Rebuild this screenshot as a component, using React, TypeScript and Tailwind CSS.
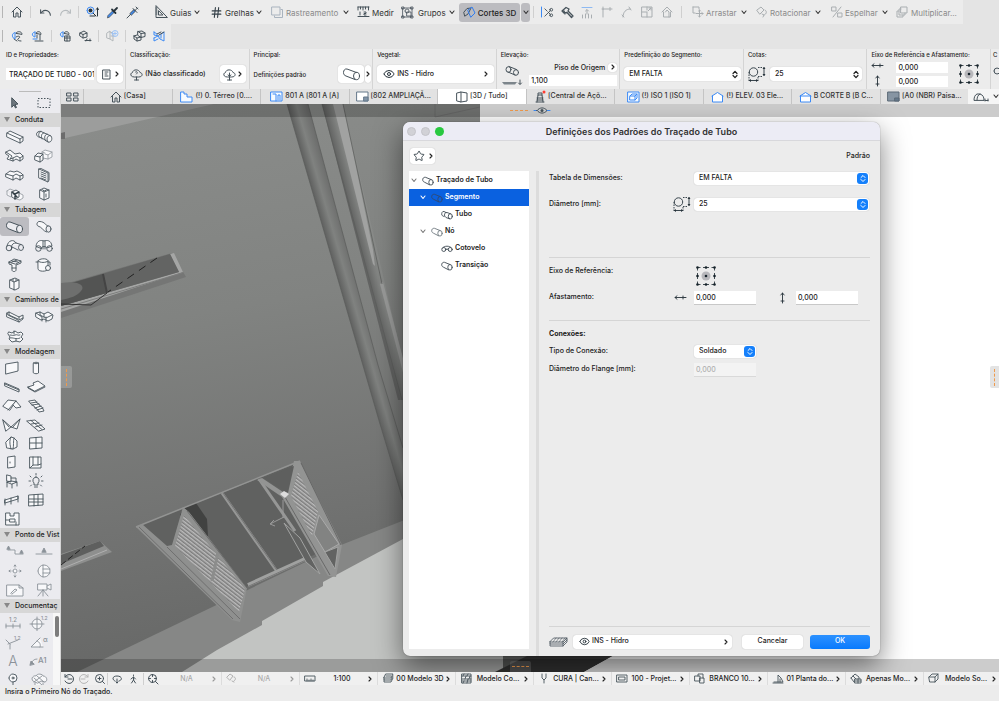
import React from "react";
import { Scissors, Eye, Star, ZoomIn, Undo, Redo, Hash } from "lucide-react";

type Box = { w: number; h: number; d: string; fill?: string; color?: string; extra?: React.ReactNode; sw?: number };

function Draw({ w, h, d, fill = "none", color = "#46525a", extra, sw = 1 }: Box) {
  return (
    <svg width={w} height={h} viewBox={`0 0 ${w} ${h}`} fill="none" stroke={color} strokeWidth={sw} strokeLinejoin="round" strokeLinecap="round" className="shrink-0" aria-hidden="true">
      <path d={d} fill={fill} />
      {extra}
    </svg>
  );
}

const Right = ({ c = "#222" }: { c?: string }) => <Draw w={4} h={6} d="M1 1 L3 3 L1 5" color={c} sw={1.1} />;
const Down = ({ c = "#333" }: { c?: string }) => <Draw w={6} h={5} d="M1 1 L3 3.5 L5 1" color={c} sw={1.1} />;

function Pipe({ color = "#46525a", fill = "none" }: { color?: string; fill?: string }) {
  return (
    <Draw w={19} h={14} color={color} fill={fill} d="M14.500 5.500 L5 2 C2.800 1.500 1.500 3.500 1.500 5.500 C1.500 7.500 2.500 8.500 4 9 L13 12.500"
      extra={<ellipse cx="14.500" cy="9" rx="3" ry="3.700" fill={fill} />} />
  );
}

function TreePipe({ color = "#3f4b53" }: { color?: string }) {
  return (
    <Draw w={12} h={10} color={color} sw={0.9} d="M9 3.500 L3.500 1.300 C1.500 1 .7 2.500 .7 3.800 C.7 5 1.500 5.800 2.500 6.200 L7.500 8.800"
      extra={<ellipse cx="9" cy="6.300" rx="2.200" ry="2.800" />} />
  );
}
const TreeTube = () => <Draw w={12} h={10} sw={0.9} color="#3f4b53" d="M5 2.500 L3 1.500 C1 1 .7 3.500 .7 4 C.7 5.500 1.500 6 3 6.500 M9.500 3.800 L6 2.500 C4 2 3.500 4 3.500 5 C3.500 6.500 4.500 7 5 7.500 L8.500 8.800" extra={<ellipse cx="9.300" cy="6.300" rx="2" ry="2.600" />} />;
const Elbow = () => <Draw w={12} h={10} sw={0.9} color="#3f4b53" d="M1.500 4 C3 1.500 9 1.500 10.500 4 M4.500 6 C5 4.500 7 4.500 7.500 6" extra={<><circle cx="2.800" cy="5.500" r="2" /><circle cx="9.200" cy="5.500" r="2" /></>} />;

function Dimension() {
  return (
    <svg width="18" height="17" viewBox="0 0 18 17" fill="none" stroke="#3a464e" aria-hidden="true" className="shrink-0">
      <circle cx="5.5" cy="6" r="4.2" />
      <path d="M1 11v4M10 11v4M1 6v5M10 1.500h5M10 10.500h5" strokeDasharray="1.500 1" />
      <path d="M1 14.500h9M16 1v9" />
      <path d="M1 14.500l2-1.500v3zM10 14.500l-2-1.500v3zM16 1l-1.500 2h3zM16 10l-1.500-2h3z" fill="#26323a" stroke="none" />
    </svg>
  );
}

function Anchor() {
  const pts = [2.5, 11, 19.5];
  return (
    <svg width="22" height="22" viewBox="0 0 22 22" aria-hidden="true" className="shrink-0">
      <circle cx="11" cy="11" r="4.5" fill="#b7b7bb" />
      {pts.map((y) =>
        pts.map((x) => (
          <g key={`${x}-${y}`}>
            <circle cx={x} cy={y} r="1.3" fill="#17232b" />
            {(x !== 11 || y !== 11) && <path d={x === 11 ? `M8 ${y}h6` : y === 11 ? `M${x} 8v6` : `M${x} ${y}h${x < 11 ? 3 : -3}M${x} ${y}v${y < 11 ? 3 : -3}`} stroke="#17232b" strokeWidth=".8" />}
          </g>
        ))
      )}
    </svg>
  );
}

const ArrowH = () => <Draw w={13} h={7} d="M1 3.500h10M3 1.800L1 3.500l2 1.700M9 2v3M12 3.500h-1" color="#26323a" sw={0.9} />;
const ArrowV = () => <Draw w={7} h={12} d="M3.500 1v10M1.800 3L3.500 1l1.700 2M2 9h3" color="#26323a" sw={0.9} />;

const Divider = () => <span className="h-3 w-px shrink-0 bg-[#cfcfcf]" />;
const Grip = () => <span className="h-3 w-px shrink-0 bg-[#b5b5b5]" />;

function Cell({ w, children, label }: { w: string; children: React.ReactNode; label: string }) {
  return (
    <button aria-label={label} className={`${w} flex h-5 shrink-0 items-center justify-center`}>
      {children}
    </button>
  );
}

function Menu({ w, icon, text, dim, arrow = true }: { w: string; icon: React.ReactNode; text: string; dim?: boolean; arrow?: boolean }) {
  return (
    <button className={`${w} ${dim ? "text-[#8a8a8a]" : "text-[#333]"} flex h-5 shrink-0 items-center gap-[2px] text-[8px] leading-none font-normal`}>
      {icon}
      <span className="pt-[2px]">{text}</span>
      {arrow && <span className="ml-auto"><Down /></span>}
    </button>
  );
}

const G = "#a9aeb1";
const HOUSE = "M1 6 L6 1 L11 6 M2.500 5.500 V11 H5 V7 H7 V11 H9.500 V5.500";

function TopBar() {
  return (
    <div className="flex h-6 shrink-0 items-center bg-[#e4e4e4]">
      <div className="flex h-6 w-[963px] shrink-0 items-center overflow-hidden bg-[#ececec] pl-[2px]">
        <Grip />
        <Cell w="w-[27px]" label="Início"><Draw w={12} h={12} d={HOUSE} /></Cell>
        <Divider />
        <span className="w-[4px]" />
        <Cell w="w-5" label="Desfazer"><Undo size={13} strokeWidth={2} color="#46525a" /></Cell>
        <Cell w="w-5" label="Refazer"><Redo size={13} strokeWidth={2} color="#b5babd" /></Cell>
        <span className="w-[3px]" />
        <Divider />
        <span className="w-[3px]" />
        <Cell w="w-5" label="Localizar"><Draw w={13} h={13} d="M1 4.500 a3.500 3.500 0 1 0 7 0 a3.500 3.500 0 1 0 -7 0" color="#3c8af5" extra={<><circle cx="4.500" cy="4.500" r="2" fill="#26323a" stroke="none" /><path d="M7 7l3 3M11.500 2v8M10 3.500L11.500 2l1 1.500M4 10h5" stroke="#26323a" /></>} /></Cell>
        <Cell w="w-5" label="Conta-gotas"><Draw w={13} h={13} d="M1.500 11.500 L2 9.500 L6.500 5 L8 6.500 L3.500 11 Z" fill="#3c8af5" color="#46525a" sw={0.8} extra={<path d="M6 3.500l3.500 3.500M8.500 4.500l2.500-2.500" stroke="#26323a" strokeWidth="1.800" />} /></Cell>
        <Cell w="w-5" label="Injetar"><Draw w={13} h={13} d="M1 12 L4 9 M4 7.500 L8 3.500 L9.500 5 L5.500 9 Z" fill="#3c8af5" color="#46525a" extra={<path d="M7 2.500l4 4M9 4.500l2.500-2.500M10 1l2 2" />} /></Cell>
        <span className="w-3" />
        <Menu w="w-[46px]" text="Guias" icon={<Draw w={14} h={14} d="M2 1 V12.500 H13 Z M4.500 6 V10 H8.500 Z M2 3h1M2 5h1M2 7h1M2 9h1" />} />
        <span className="w-[10px]" />
        <Menu w="w-[52px]" text="Grelhas" icon={<Hash size={13} strokeWidth={2} color="#333f47" />} />
        <span className="w-[9px]" />
        <Menu w="w-[78px]" dim text="Rastreamento" icon={<Draw w={13} h={13} color="#a9b3be" d="M1 1h8v8h-8zM3.500 10v1.500h8v-8h-1.500" />} />
        <span className="w-[8px]" />
        <Menu w="w-[35px]" arrow={false} text="Medir" icon={<Draw w={13} h={12} d="M1 1v3M3.500 1v2M6 1v3M8.500 1v2M11.500 1v3M1 1h11M1 10.500h11M3 6v3M7 6h2v1.500h-2v1.500h2" />} />
        <span className="w-[9px]" />
        <Menu w="w-[54px]" text="Grupos" icon={<Draw w={15} h={13} d="M2 2h9v9h-9zM1 1h2v2h-2zM10 1h2v2h-2zM1 10h2v2h-2zM10 10h2v2h-2zM4 5a2 2 0 1 0 4 0a2 2 0 1 0-4 0M6 6h4v4h-4z" sw={0.8} />} />
        <span className="w-1" />
        <button className="flex h-[19px] w-[61px] shrink-0 items-center justify-center gap-[2px] rounded-[3px] bg-[#bcbcc0] text-[8px] leading-none text-[#222]">
          <Draw w={13} h={13} d="M1 6 L4 2.500 L8 2 L5 8 L2 10 Z" extra={<path d="M5 4L9 1l3 6-4 4z" stroke="#2f7cf0" />} />
          <span className="pt-[2px]">Cortes 3D</span>
        </button>
        <button aria-label="Opções de cortes" className="ml-px flex h-[19px] w-[9px] shrink-0 items-center justify-center rounded-[3px] bg-[#bcbcc0]"><Down /></button>
        <span className="w-[3px]" />
        <Divider />
        <span className="w-[3px]" />
        <Cell w="w-5" label="Dividir"><span className="flex items-center"><Draw w={3} h={12} d="M1.500 1v10" color={"#3c8af5"} /><Scissors size={11} color="#46525a" className="rotate-180" /></span></Cell>
        <Cell w="w-5" label="Ajustar"><Draw w={13} h={13} d="M1 5 L5 1.500 L8 3 L7 5 L12 10 L10.500 11.500 L6 6.500 L3 7 Z M3 5 L4 8" sw={1.300} /></Cell>
        <Cell w="w-5" label="Elevar"><Draw w={12} h={13} color={G} d="M1.500 12v-3M4.500 12v-4M7.500 12v-4M10.500 12v-3M6 8v-4M4.500 5L6 3.500l1.500 1.500" extra={<path d="M1 1.500h10" stroke="#8db9f2" />} /></Cell>
        <Cell w="w-5" label="Canto"><Draw w={12} h={12} color={G} d="M2 11V3H11M2 1v2M1 3h1M9 1.500v3" /></Cell>
        <Cell w="w-5" label="Curva"><Draw w={12} h={12} color={G} d="M2 11C2 6 5 3 9 3M1 9l2 2M8 1l2 3" /></Cell>
        <Cell w="w-5" label="Redimensionar"><Draw w={12} h={12} color={G} d="M1 1h10v10h-10zM1 6h5v5M6 1v3M7 5l3-3M8 2h2v2" /></Cell>
        <Cell w="w-5" label="Cobertura"><Draw w={12} h={12} color={G} d="M1 6L6 1l5 5M2.500 6v5h7v-5M4.500 6L6 4l2 2v5" /></Cell>
        <span className="w-1" />
        <Divider />
        <span className="w-[10px]" />
        <Menu w="w-[55px]" dim text="Arrastar" icon={<Draw w={12} h={12} color={G} d="M1 1h6v2M1 1v6h2M4 7.500h7M7.500 4v7M6.500 5l1-1 1 1M6.500 10l1 1 1-1M10 6.500l1 1-1 1" />} />
        <span className="w-[9px]" />
        <Menu w="w-[65px]" dim text="Rotacionar" icon={<Draw w={12} h={12} color={G} d="M1 4L5 1l3 3-4 4zM9 4c2 1 2 4-1 5M6 8l2 1-1 2" />} />
        <span className="w-[10px]" />
        <Menu w="w-[57px]" dim text="Espelhar" icon={<Draw w={12} h={12} color={G} d="M1 1h4v4h-4zM10 1L2 11M7 7h4v4h-4z" />} />
        <span className="w-2" />
        <Menu w="w-[62px]" dim arrow={false} text="Multiplicar..." icon={<Draw w={13} h={12} color={G} d="M5 1h6v6h-6zM5 3h-2v6h6v-2M3 5h-2v6h6v-2" />} />
      </div>
    </div>
  );
}

function SecondBar() {
  return (
    <div className="flex h-[25px] shrink-0 bg-[#e4e4e4]">
      <div className="flex w-[171px] items-center bg-[#ececec] pb-px pl-[2px]">
        <Grip />
        <span className="w-1" />
        <Cell w="w-5" label="Mostrar seleção"><Draw w={12} h={12} d="M5 3c1-2 6-2 6 1zM5 7c3-2 5 0 3 1s-2 3 2 3M3 9l3 2" extra={<path d="M4 2.500C1 3 0 7 4 9V3" stroke="#3c8af5" />} /></Cell>
        <Cell w="w-5" label="Camadas"><Draw w={13} h={12} d="M5 3c1-2 5-2 5 1zM6 5v3M9 5v5M4 11h8" extra={<path d="M4 2C1 2 0 6 4 7V2M2 9h4" stroke="#3c8af5" />} /></Cell>
        <span className="w-1" /><Divider /><span className="w-[3px]" />
        <Cell w="w-5" label="Filtrar"><Draw w={12} h={12} d="M5 3c1-2 5-2 5 1zM6 6h5v5h-5zM8 6v5M6 8h5" extra={<path d="M4 2C1 2 0 6 4 7V2" stroke="#3c8af5" />} /></Cell>
        <Cell w="w-5" label="Elemento"><Draw w={13} h={12} d="M1 3L5 1l3 2v4L4 8 1 6zM1 3l3 1.500L8 3M4 4.500V8M6 10.500h6M8 9l-1 2M11 9v2" /></Cell>
        <span className="w-[3px]" /><Divider /><span className="w-[3px]" />
        <Cell w="w-5" label="Adicionar"><Draw w={13} h={12} color="#b3b8bb" d="M1 3L4 1v8l-3-1zM4 2l3 1v8l-3-2M5 6h3" extra={<path d="M6 3.500a3 3 0 1 0 6 0a3 3 0 1 0-6 0M7.500 3.500h3M9 2v3" stroke="#9cc3f7" />} /></Cell>
        <span className="w-[3px]" /><Divider /><span className="w-[3px]" />
        <Cell w="w-5" label="Blocos"><Draw w={13} h={12} d="M5 1.500l4-.5 3 2v3.500l-4 1-3-2zM5 1.500l3 2 4-.5M8 3.500V7.500M1 6l3-1M1 6v3l3 2 4-1V7.500M1 6l3 2v3M4 8l4-1" /></Cell>
        <Cell w="w-5" label="Corte"><Draw w={12} h={12} color="#3c8af5" d="M1 2l3 2M1 2v3l5 1M1 8l4-2 2 3 4 2V2L8 4v4M1 8v3l4-2" extra={<path d="M4 4l4-2M6 5l5-3" stroke="#46525a" />} /></Cell>
      </div>
    </div>
  );
}

function Column({ title, children, first }: { title: string; children: React.ReactNode; first?: boolean }) {
  return (
    <div className={`${first ? "w-[126px] shrink-0 pl-[6px]" : "min-w-0 flex-1 pl-1"} flex flex-col border-r border-[#d4d4d4] pr-[2px]`}>
      <div className="h-3 pt-[2px] text-[6px] leading-[8px] whitespace-nowrap text-[#222]">{title}</div>
      <div className="flex h-7 items-center pb-[2px]">{children}</div>
    </div>
  );
}

const white = "rounded-[3px] bg-white shadow-[0_0_1px_rgba(0,0,0,.3)]";

const UpDown = () => <Draw w={6} h={9} d="M1 3.500L3 1.300l2 2.200M1 5.500l2 2.200 2-2.200" color="#222" sw={1.2} />;

function InfoBox() {
  return (
    <div className="flex h-10 shrink-0 overflow-hidden bg-[#ececec] text-[#222]">
      <Column first title="ID e Propriedades:">
        <input aria-label="ID" defaultValue="TRAÇADO DE TUBO - 001" className="h-3 w-[88px] min-w-0 bg-white pl-[3px] text-[7px] outline-none" />
        <button aria-label="Propriedades" className={`${white} ml-[3px] flex h-[18px] w-[26px] shrink-0 items-center justify-center gap-1`}>
          <Draw w={9} h={11} d="M1 1h7v9h-7zM3 3h3M3 5h2M3 7h3" /><Right />
        </button>
      </Column>
      <Column title="Classificação:">
        <Draw w={13} h={13} d="M4 9C0 9 0 5 2.500 4.500 3 1 9 1 10 4.500c3 .5 3 4.500-1 4.500zM6.500 9v3M4.500 12h4M5.500 4c1-1 3 0 1 2" />
        <span className="ml-[2px] text-[7px] whitespace-nowrap">(Não classificado)</span>
        <button aria-label="Escolher classificação" className={`${white} mr-px ml-auto flex h-[18px] w-[26px] items-center justify-center gap-[2px]`}>
          <Draw w={13} h={13} d="M4 9C0 9 0 5 2.500 4.500 3 1 9 1 10 4.500c3 .5 3 4.500-1 4.500zM6.500 5v7M4.500 12h4M5 7l1.500 1 1.500-1" /><Right />
        </button>
      </Column>
      <Column title="Principal:">
        <span className="text-[6px] whitespace-nowrap">Definições padrão</span>
        <button aria-label="Tubo" className={`${white} ml-auto flex h-[18px] w-[26px] items-center justify-center`}><Pipe /></button>
        <button aria-label="Mais" className={`${white} -mr-px ml-px flex h-[18px] w-[6px] items-center justify-center`}><Right /></button>
      </Column>
      <Column title="Vegetal:">
        <button className={`${white} flex h-[18px] w-full items-center px-[6px] text-[7px]`}>
          <Eye size={12} color="#26323a" /><span className="ml-[2px]">INS - Hidro</span><span className="ml-auto"><Right /></span>
        </button>
      </Column>
      <Column title="Elevação:">
        <Draw w={22} h={24} d="M8 4.500l7.500 3M7 10l7 3" extra={<><ellipse cx="7.500" cy="7.500" rx="2.500" ry="2.800" /><ellipse cx="15" cy="10.500" rx="2.500" ry="2.800" /><path d="M1 20h15l-2 2.500h-11z" fill="#7c858b" stroke="none" /><path d="M19 18v4M17.500 21l1.500 1.500 1.500-1.500" /></>} />
        <div className="ml-auto flex w-[88px] flex-col gap-[3px]">
          <div className="flex items-center justify-end gap-[3px] text-[7px] leading-[9px]">Piso de Origem<button aria-label="Piso" className={`${white} flex size-[9px] items-center justify-center`}><Right /></button></div>
          <input aria-label="Elevação" defaultValue="1,100" className="h-[11px] w-full bg-white pl-[2px] text-[7px] outline-none" />
        </div>
      </Column>
      <Column title="Predefinição do Segmento:">
        <Pick label="Predefinição do Segmento" value="EM FALTA" />
      </Column>
      <Column title="Cotas:">
        <Dimension /><span className="w-1 shrink-0" />
        <Pick label="Cotas" value="25" />
        <span className="w-[2px] shrink-0" />
      </Column>
      <Column title="Eixo de Referência e Afastamento:">
        <div className="flex w-full items-center">
          <div className="flex w-[13px] flex-col items-center gap-[6px]"><ArrowH /><ArrowV /></div>
          <div className="ml-3 flex w-[52px] flex-col gap-[3px]">
            <input aria-label="Afastamento horizontal" defaultValue="0,000" className="h-[11px] w-full bg-white pl-[2px] text-[7px] outline-none" />
            <input aria-label="Afastamento vertical" defaultValue="0,000" className="h-[11px] w-full bg-white pl-[2px] text-[7px] outline-none" />
          </div>
          <span className="w-[10px]" /><Anchor />
        </div>
      </Column>
      <div className="flex w-2 shrink-0 flex-col overflow-hidden pt-[2px] pl-[2px] text-[6px] leading-[8px]">C<span className="pt-2"><Draw w={8} h={8} d="M1 4a3 3 0 1 0 6 0a3 3 0 1 0-6 0" /></span></div>
    </div>
  );
}

function Pick({ label, value }: { label: string; value: string }) {
  return (
    <div className={`${white} relative h-[14px] min-w-0 flex-1`}>
      <select aria-label={label} className="block size-full appearance-none bg-transparent pl-[5px] text-[7px] text-[#222] outline-none"><option>{value}</option></select>
      <span className="pointer-events-none absolute inset-y-0 right-[3px] flex items-center"><UpDown /></span>
    </div>
  );
}

const BLUE = "#3c8af5";
const HUT = "M1 5L6.500 1.500l5.500 3.500M1.500 5v6h10v-6";
const tabs: { t: string; i: React.ReactNode; on?: boolean }[] = [
  { t: "[Casa]", i: <Draw w={12} h={12} d={HOUSE} /> },
  { t: "(!) 0. Térreo [0....", i: <Draw w={13} h={12} color={BLUE} fill="#f7fbff" d="M1 1h3v2h3v3h5v5h-11z" /> },
  { t: "801 A [801 A [A]", i: <Draw w={13} h={11} color={BLUE} fill="#f7fbff" d="M1 1h11v9h-11z" extra={<path d="M3 3h3v7M8 9v-5h2v5" />} /> },
  { t: "[802 AMPLIAÇÃ...", i: <Draw w={13} h={11} color="#65788a" fill="#fff" d="M1 1h11v9h-11z" extra={<path d="M8 6h4v4h-4z" fill="#8295a8" />} /> },
  { t: "[3D / Tudo]", i: <Draw w={12} h={12} d="M1 2l4-1v10l-4-1zM5 1l6 1v8l-6 1" />, on: true },
  { t: "[Central de Açõ...", i: <Draw w={12} h={13} d="M3 12l1-7h4l1 7M2 12h8M4 5v-2h4v2M3 8h6M3 10h6" extra={<circle cx="10" cy="2" r="1.500" fill="#ff3b30" stroke="none" />} /> },
  { t: "(!) ISO 1 [ISO 1]", i: <Draw w={13} h={12} color={BLUE} fill="#f7fbff" d="M1 1h11v10h-11z" extra={<path d="M3 5l2-2h5v4l-2 2h-5zM3 5h5v4M8 5l2-2" />} /> },
  { t: "(!) ELEV. 03 Ele...", i: <Draw w={13} h={12} color={BLUE} fill="#fff" d={HUT} /> },
  { t: "B CORTE B [B C...", i: <Draw w={13} h={12} color={BLUE} fill="#fff" d={HUT} extra={<path d="M1.500 5h10" />} /> },
  { t: "[A0 (NBR) Paisa...", i: <Draw w={13} h={11} color="#5a6876" fill="#8795a3" d="M1 1h11v9h-11z" extra={<path d="M8 7h4v3h-4z" fill="#65788a" />} /> },
];

function Tabs() {
  return (
    <nav className="flex h-[15px] min-w-0 bg-[#e2e2e2] text-[7px] text-[#333]">
      <button aria-label="Vistas" className="flex w-[22px] shrink-0 items-center justify-center"><Draw w={13} h={10} d="M1 1h4v3h-4zM8 1h4v3h-4zM1 6h4v3h-4zM8 6h4v3h-4z" /></button>
      {tabs.map((t) => (
        <button key={t.t} className={`${t.on ? "bg-white" : ""} flex min-w-0 flex-1 items-center justify-center gap-[2px] overflow-hidden border-l border-[#c4c4c4] whitespace-nowrap`}>{t.i}<span>{t.t}</span></button>
      ))}
      <button aria-label="Mais vistas" className="flex w-[31px] shrink-0 items-center justify-end gap-1 bg-[#f5f5f5]"><Draw w={16} h={10} d="M1 8c0-3 1-5 3-6h3c3 1 4 3 4 6zM4 8c0-3 1-5 3-6M12 8.500h3M12 7v2M15 7v2" /><Down /></button>
    </nav>
  );
}

const S = (d: string, color?: string, extra?: React.ReactNode) => <Draw w={20} h={16} d={d} color={color} sw={0.9} fill="#f8f8fa" extra={extra} />;
const lines = (d: string) => <path d={d} fill="none" />;
const Q = "#8b9299";

const groups: { name: string; grid: string; items: [string, React.ReactNode][] }[] = [
  { name: "Conduta", grid: "auto-rows-[19px] grid-cols-[29px_29px]", items: [
    ["Conduta reta", S("M2 4L5 2l13 6v4l-3 2L2 8z", undefined, lines("M2 4l13 6v4M15 10l3-2"))],
    ["Conduta flexível", S("M4 3C1 4 3 8 5 8l3 1 6 4c3 1 5-3 3-6L8 3C7 2 5 2 4 3z", undefined, lines("M7 2.500c-3 1-3 5-1 6M10 4c-3 0-3 4-2 6M13 5c-3 1-3 5-1 7M16 6.500c-3 0-4 4-2 6.500"))],
    ["Curva de conduta", S("M1 4l4-2 5 4 5-1 3 3v3l-3 2-4-2-3 2-6-2 2-3-3-2z", undefined, lines("M1 4l6 4-2 3 3-1 4-2 3 2 3-2M8 10v3M15 10v3"))],
    ["Transição de conduta", S("M8 5V4l3-2 7 2v5l-4 2-5-1z", "#9a9fa5", <><path d="M11 6l3 1 4-3M14 7v4M8 4l3 1" fill="none" /><path d="M1 8l3-3 5 1v6l-3 2-5-2zM1 8l5 1 3-3M6 9v5" fill="#f8f8fa" stroke="#46525a" /></>)],
    ["Derivação", S("M1 7l4-3 4 1 3-1 4 2 2 2v3l-3 2-4-2-3 2-7-3z", undefined, lines("M1 7l7 2 3-2 4 2 3-1M8 9v4M15 9v4"))],
    ["Grelha de conduta", S("M5 2l9 4v9l-9-4zM5 2l2-.5 8 4v8l-1 1", undefined, lines("M7 5l5 2M7 7l5 2M7 9l5 2M7 11l5 2"))],
    ["Acessório de conduta", S("M2 5l3-2 5 2M2 5v4l4 2M14 7l4 2v3l-3 2-4-1", "#9a9fa5", <><path d="M7 6l4-2 3 2v5l-4 2-3-2z" fill="#f8f8fa" stroke="#46525a" /><path d="M7 6l3 2 4-2M10 8v5M8 7l4 4" stroke="#333f47" strokeWidth="1.500" /></>)],
    ["Equipamento", S("M6 4l4-2 5 2v8l-5 2-4-2z", undefined, lines("M6 4l4 2 5-2M10 6v8M8.500 3.700a2 1 0 1 0 4 0M12 8v3"))],
  ]},
  { name: "Tubagem", grid: "auto-rows-[19px] grid-cols-[29px_29px]", items: [
    ["Tubo", <Pipe fill="#ececf0" />],
    ["Tubo flexível", S("M14 7C11 6 11 3 6 2.500 3 2 2 6 4 7c4 1 5 5 8.500 6", undefined, <ellipse cx="14.500" cy="10" rx="2.500" ry="3.200" />)],
    ["Cotovelo", S("M2 8C3 2 9 1 11 5l5 1.500M6 12l1-3 6 3", undefined, <><circle cx="4" cy="10" r="2.800" /><ellipse cx="16" cy="9.500" rx="2.500" ry="3" /><path d="M6.500 9c0-3 2-4 4.500-4" fill="none" /></>)],
    ["União", S("M2 8C3 2 7 2 10 3c3-1 7-1 8 5l-5 2c-1-2-5-2-6 0z", undefined, <><circle cx="4.500" cy="10.500" r="2.800" /><circle cx="15.500" cy="10.500" r="2.800" /><path d="M9 3v8M11 3v8" fill="none" /></>)],
    ["Ralo", S("M4 5l5-3 7 2-5 3zM4 5v2l3 1v5c0 2 4 2 4 0V8l5-2V4", undefined, lines("M7 4l6 1M6 5.500l6-2.500M7 11h4"))],
    ["Acessório", S("M4 4c1-3 10-3 10 0v8c-1 3-10 3-10 0zM2 5h2M14 5h2v3", undefined, <><path d="M4 4c2 2 8 2 10 0" fill="none" /><circle cx="14" cy="11" r="2.500" fill="#f8f8fa" /></>)],
    ["Equipamento de tubagem", S("M5 4l5-2 4 2v8l-4 2-5-2z", undefined, lines("M5 4l4 2 5-2M9 6v8M8 3v2M11 3v2"))],
  ]},
  { name: "Caminhos de", grid: "auto-rows-[19px] grid-cols-[29px_29px]", items: [
    ["Calha", S("M2 4l2-1 10 5 4-2v4l-4 3L2 8z", undefined, lines("M2 4l1 2 10 5 1 2M4 3v3l9 4M14 8v3l4-2"))],
    ["Conexão de calha", S("M2 4l4-1 4 2 4-2 5 3-1 4-4 2-4-2-3 1-5-3z", undefined, lines("M2 4l6 4v4M6 3v3l6 3 6-3M12 8v5M10 5v3"))],
    ["Cruzamento", S("M4 4l3 1 3-2 3 2 3-1 2 2-2 3 2 2-3 3-4-1-4 1-3-3 1-2-2-3z", undefined, lines("M5 7c2 0 3 1 5 0s3 1 5 0M5 10c3-1 6 2 10 0M9 3v3M11 11v2"))],
  ]},
  { name: "Modelagem", grid: "h-[169px] auto-rows-fr grid-cols-[24px_24px]", items: [
    ["Parede", S("M4 4l12-2v9L4 14z")],
    ["Pilar", S("M7.500 3c1-1 4-1 5 0v10c-1 1-4 1-5 0z", undefined, lines("M7.500 3c1 1 4 1 5 0"))],
    ["Viga", S("M3 4l14 6v3L3 7z", undefined, lines("M3 5l14 6"))],
    ["Laje", S("M2 8l6-2-1-2 5-2 7 5-10 5z", undefined, lines("M2 8v1l7 4 10-5"))],
    ["Cobertura", S("M1 8L6 2l8 1-6 9z", undefined, <path d="M14 3l-8 9M14 3l5 6-5 1-3-3" fill="#f8f8fa" />)],
    ["Escada", S("M3 3l6-1 2 3 2 1 1 2 2 1 2 4-5 1-2-3-2-1-1-2-2-1z", undefined, lines("M5 5l6-1M6 7l7-1M9 10l6-2M11 12l6-2"))],
    ["Casca", S("M1 3l8 7 9-8-3 10-6-2-5 4z", undefined, lines("M1 3l6 7M18 2l-7 8"))],
    ["Malha", S("M1 4l8-1 10 9-6 2z", undefined, lines("M5 3.500l11 9M5 7l8-1M9 10l7-2"))],
    ["Morph", S("M4 7l5-5 3 1 3 3v6l-4 2-6-1z", undefined, lines("M9 2c-2 4-1 8 0 12M12 3c-1 3 0 8-1 11"))],
    ["Janela", S("M4 3l12-1v11L4 14z", undefined, lines("M10 2.500v11M4 8h12"))],
    ["Porta", S("M6 3l7-1v11l-7 1z", undefined, lines("M8 8v1"))],
    ["Abertura", S("M4 3h11v11h-11z", undefined, lines("M4 14l3-3h5l3-1M7 3v8M12 3v8"))],
    ["Objeto", S("M5 2l4 1v6l-4-1zM5 9l4-1 6 1-5 2z", undefined, lines("M5 9v5M10 11v4M15 9v4M9 5h5v4"))],
    ["Luminária", <Draw w={16} h={16} d="M8 4a3.500 3.500 0 0 0-2 6v2h4v-2a3.500 3.500 0 0 0-2-6zM8 0.500v1.500M2 3l1 1M14 3l-1 1M1 8h1.500M13.500 8h1.500M2.500 13l1-1M13.500 13l-1-1M6.500 14h3" sw={0.9} />],
    ["Guarda-corpo", S("M3 8l13-4v3L3 11zM3 7v6M9 6v6M16 4v6")],
    ["Fachada", S("M3 3l14-1v11L3 14z", undefined, lines("M8 3v11M12 2.500v11M3 7h14M3 10h14"))],
    ["Zona", S("M4 2h4v3h4v-3h5v12h-13z", undefined, lines("M4 9h3M8 8h5v3h-5zM14 11v3"))],
  ]},
  { name: "Ponto de Vist", grid: "auto-rows-[19px] grid-cols-[29px_29px]", items: [
    ["Corte", S("M3 6h7v4h8", Q, <path d="M2 5l1.500-3L5 5zM15 9l1.500-3L18 9z" fill={Q} />)],
    ["Elevação", S("M2 10h16", Q, <path d="M8 8l2-4 2 4z" fill={Q} />)],
    ["Elevação interior", S("M8 8a2 2 0 1 0 4 0a2 2 0 1 0-4 0M10 2v2M10 12v2M4 8h2M14 8h2M9 3l1-1 1 1M9 13l1 1 1-1M5 7l-1 1 1 1M15 7l1 1-1 1", Q)],
    ["Folha de trabalho", S("M4 8a6 6 0 1 0 12 0a6 6 0 1 0-12 0M9 2v12M9 6h7M9 10h7", Q)],
    ["Detalhe", S("M2 3h12l4 3v8h-16zM14 3v3h4M6 11l4-4 2 1-5 4z", Q)],
    ["Câmara", S("M4 2h9v6h-9zM13 4l4-2v6l-4-2M9 8v6M9 8l-5 6M9 8l5 6", Q)],
  ]},
  { name: "Documentaç", grid: "auto-rows-[19px] grid-cols-[26px_26px]", items: [
    ["Cota linear", S("M3 11h14M3 9v4M17 9v4M10 9v4", Q, <text x="6" y="7" fontSize="6" fontFamily="Inter" fill={Q} stroke="none">1.2</text>)],
    ["Cota de nível", S("M3 9a5 5 0 1 0 10 0a5 5 0 1 0-10 0M8 2v14M1 9h14", Q, <text x="12" y="5" fontSize="5" fontFamily="Inter" fill={Q} stroke="none">1.2</text>)],
    ["Cota radial", S("M3 6l4 4M7 10v5M5 10l10-4", Q, <text x="11" y="6" fontSize="5" fontFamily="Inter" fill={Q} stroke="none">1.2</text>)],
    ["Cota de ângulo", S("M14 13H2L11 4M8 7c3 1 4 4 3 6", Q, <text x="14" y="8" fontSize="7" fontFamily="Inter" fill={Q} stroke="none">α</text>)],
    ["Texto", <span className="text-[14px] leading-none font-light text-[#8b9299]">A</span>],
    ["Rótulo", S("M2 11c1-3 3-5 6-5", Q, <><path d="M1 12l1-4 3 3z" fill={Q} /><text x="9" y="10" fontSize="8" fontFamily="Inter" fill={Q} stroke="none">A1</text></>)],
    ["Eixo", S("M6 6a4 4 0 1 0 8 0a4 4 0 1 0-8 0M10 10v6", undefined, <circle cx="10" cy="6" r="1" />)],
    ["Hachura", S("M4 9C1 6 5 3 7 4c1-3 7-2 7 0 4 0 5 5 2 6l-4-1-3 2zM6 11v4h8v-4", Q, lines("M5 6l8 7M8 4l7 6M13 4l-8 6"))],
  ]},
];

function Toolbox() {
  return (
    <aside className="relative flex w-[61px] shrink-0 flex-col overflow-hidden border-r border-[#d5d5d5] bg-[#ebebef] text-[#222]">
      <span className="mt-[2px] ml-[19px] h-px w-[22px] shrink-0 bg-[#bbb]" />
      <div className="grid h-[21px] shrink-0 grid-cols-[29px_29px] items-center justify-items-center">
        <button aria-label="Seta"><Draw w={10} h={12} d="M2 1l6 6-3 .5 1.500 3-1 .5-1.500-3-2 2z" fill="#6d767d" color="#46525a" /></button>
        <button aria-label="Área"><svg width="14" height="12" aria-hidden="true"><rect x="1" y="1.500" width="12" height="9" fill="none" stroke="#46525a" strokeDasharray="1.500 1.500" /></svg></button>
      </div>
      {groups.map((g) => (
        <section key={g.name} className="shrink-0">
          <h2 className="flex h-[14px] items-center gap-[5px] bg-[#d7d7d7] pl-1 text-[7px] whitespace-nowrap">
            <svg width="6" height="6" aria-hidden="true" className="shrink-0"><path d="M0 0h6L3 5z" fill="#888" /></svg>{g.name}
          </h2>
          <div className={`grid ${g.grid}`}>
            {g.items.map(([name, icon]) => (
              <button key={name} aria-label={name} className={`${name === "Tubo" ? "rounded-[3px] bg-[#bcbcc1]" : ""} flex h-full min-h-0 items-center justify-center`}>{icon}</button>
            ))}
          </div>
        </section>
      ))}
      <div className="absolute right-0 bottom-0 h-[72px] w-[7px] bg-[#f7f7f7]"><div className="mx-auto mt-[3px] h-[21px] w-1 rounded-full bg-[#7d7d7d]" /></div>
    </aside>
  );
}

function Scene() {
  return (
    <svg className="absolute inset-0 size-full" viewBox="61 104 938 568" preserveAspectRatio="xMinYMin slice" aria-hidden="true">
      <defs>
        <linearGradient id="wall" x1="0" y1="0" x2=".15" y2="1"><stop offset="0" stopColor="#8b8d8b" /><stop offset=".4" stopColor="#818381" /><stop offset=".75" stopColor="#727372" /><stop offset="1" stopColor="#676867" /></linearGradient>
        <linearGradient id="pipeA" gradientUnits="userSpaceOnUse" x1="287" y1="104" x2="306" y2="98.500"><stop offset="0" stopColor="#5f605f" /><stop offset=".45" stopColor="#808280" /><stop offset="1" stopColor="#6b6c6b" /></linearGradient>
        <linearGradient id="pipeB" gradientUnits="userSpaceOnUse" x1="322" y1="104" x2="341" y2="99"><stop offset="0" stopColor="#626362" /><stop offset=".5" stopColor="#828482" /><stop offset="1" stopColor="#8d8f8d" /></linearGradient>
        <pattern id="slat" width="3" height="3" patternUnits="userSpaceOnUse" patternTransform="rotate(38)"><rect width="3" height="3" fill="#7c7c7c" /><rect width="3" height="1.500" fill="#bbb" /></pattern>
      </defs>
      <rect x="61" y="104" width="938" height="568" fill="#fff" />
      <path d="M61 104H480V122L560 672H61z" fill="url(#wall)" />
      <path d="M61 104H214L61 139z" fill="#9c9d9c" /><path d="M61 133l4-1v7h-4z" fill="#6c6c6c" />
      <path d="M435 117l45-10M435 104v13" stroke="#777" strokeWidth=".8" />
      <path d="M287 104H308L378 365 403 448V500L380 424z" fill="url(#pipeA)" />
      <path d="M322 104H343L412 400H398z" fill="url(#pipeB)" />
      <path d="M333 104h10l30 146 2 16-2-2z" fill="#a1a2a1" /><path d="M380 284l3-2 22 84v14z" fill="#9a9b9a" />
      <path d="M322 104l80 296M343 104l39 180M308 104l70 261 25 83M287 104l93 320 23 76" stroke="#5a5b5a" strokeWidth=".7" fill="none" />
      <path d="M61 285L172 253l14 24L61 318z" fill="#757675" />
      <path d="M170 254l4-1 9 19L61 312v-6l118-34z" fill="#a5a6a5" /><path d="M61 309l121-36" stroke="#7c7d7c" />
      <path d="M61 286l109-32 9 18-118 34z" fill="#636463" /><path d="M61 286l42-12 4 19-46 13z" fill="#535453" />
      <path d="M103 274l4 19" stroke="#444" strokeWidth="2" /><path d="M61 283c18-3 25 3 20 8-4 5-10 7-20 9z" fill="#6e6f6e" />
      <path d="M157 258L108 292" stroke="#222" strokeDasharray="8 6" /><path d="M107 293l-16 12-30-1" stroke="#333" fill="none" />
      <path d="M61 554l39-13 12 11-51 19z" fill="#8e8f8e" /><path d="M61 555l39-14 4 5-43 18z" fill="#5e5f5e" /><path d="M61 565l24-19" stroke="#222" strokeDasharray="6 3" /><path d="M61 569l46-19" stroke="#b0b0b0" />
      <path d="M77 672L341 545l61-24 60-20v171z" fill="#868786" />
      <path d="M182 672l35-22 45-25v-4l61-35v-4l80-43 100-45v178z" fill="#c2c4c2" />
      <path d="M495 672l40-20h85l-36 20z" fill="#3b3b3b" />
      <path d="M584 672l36-20v-60h379v80z" fill="#fff" />
      <path d="M141 525L300 462l20 90-74 35-80-41z" fill="#606160" />
      <path d="M184 508l12-5 11 16 1 17-8 4-20-25z" fill="#414241" />
      <path d="M136 527L300 461" stroke="#939493" strokeWidth="1.500" />
      <path d="M222 493l56 80M259 479l36 52" stroke="#969796" strokeWidth="3" /><path d="M223 493l56 80" stroke="#666" strokeWidth=".7" />
      <path d="M248 585l57-26" stroke="#a0a1a0" strokeWidth="4" /><path d="M249 586l57-26" stroke="#666" strokeWidth=".7" />
      <path d="M136 527l6-3 25 22 5-1 11-38 6 5 58 76-7 34-8-2z" fill="#8f908f" />
      <path d="M184 515l61 74-6 23-64-66z" fill="url(#slat)" /><path d="M218 552l-6 29" stroke="#8c8d8c" strokeWidth="3" />
      <path d="M139 527l94 92M167 547l73 72M187 511l60 77" stroke="#666" strokeWidth=".8" />
      <path d="M257 480l5-2 24 16 8-33h6l42 84-6 32-8-1-46-79z" fill="#939493" />
      <path d="M264 478l30-12-6 27z" fill="#5e5f5e" />
      <path d="M298 472l20 39-6 25-21-40z" fill="url(#slat)" /><path d="M319 515l20 29-14 8-11-18z" fill="#828382" stroke="#aaa" />
      <path d="M325 552l13-5-3 22-9-15zM284 523l16 15 20 36-14-12z" fill="#626362" stroke="#a2a3a2" />
      <path d="M285 497l45 78M301 463l40 82" stroke="#5e5e5e" strokeWidth=".8" /><path d="M280 494l4-3 5 3-4 4z" fill="#ddd" />
      <path d="M270 524l14-7M270 524l4-4M270 524l5 2M283 500v18" stroke="#999" />
    </svg>
  );
}

const TreeRow = ({ pad, icon, text, open, on }: { pad: string; icon: React.ReactNode; text: string; open?: boolean; on?: boolean }) => (
  <li className={`${pad} ${on ? "bg-[#0a61e0] text-white" : "text-[#222]"} flex h-[17px] items-center text-[7px] font-semibold`}>
    <span className="mr-1 flex w-2 justify-center">{open && <Down c={on ? "#fff" : "#777"} />}</span>{icon}<span className="ml-[2px]">{text}</span>
  </li>
);

function BlueSelect({ id, value, w }: { id: string; value: string; w: string }) {
  return (
    <div className={`${white} ${w} relative h-[13px] shrink-0`}>
      <select id={id} className="block size-full appearance-none bg-transparent pl-[5px] text-[7px] text-[#222] outline-none"><option>{value}</option></select>
      <span className="pointer-events-none absolute top-px right-px flex size-[11px] items-center justify-center rounded-[3px] bg-[#1580fb]"><Draw w={6} h={9} d="M1 3.500L3 1.500l2 2M1 5.500l2 2 2-2" color="#fff" /></span>
    </div>
  );
}

const field = "h-[13px] w-[62px] bg-white pl-[2px] text-[7px] shadow-[0_1px_0_rgba(0,0,0,.15)] outline-none";

function Dialog() {
  return (
    <div role="dialog" aria-label="Definições dos Padrões do Traçado de Tubo" className="absolute top-[18px] left-[342px] flex h-[534px] w-[477px] flex-col overflow-hidden rounded-[7px] bg-[#ececec] text-[7px] text-[#222] shadow-[0_10px_28px_rgba(0,0,0,.5),0_0_1px_rgba(0,0,0,.6)]">
      <header className="grid h-[19px] shrink-0 grid-cols-[100px_1fr_100px] items-center border-b border-[#d8d8dc] bg-[#ececf5]">
        <div className="flex gap-[5px] pl-1">
          <button aria-label="Fechar" className="size-[9px] rounded-full border border-[#c3c3c9] bg-[#d1d1d6]" />
          <button aria-label="Minimizar" className="size-[9px] rounded-full border border-[#c3c3c9] bg-[#d1d1d6]" />
          <button aria-label="Ampliar" className="size-[9px] rounded-full bg-[#28c840]" />
        </div>
        <h1 className="text-center text-[9px] leading-none font-semibold whitespace-nowrap text-[#333]">Definições dos Padrões do Traçado de Tubo</h1>
      </header>
      <div className="flex h-[30px] shrink-0 items-center justify-between pr-[10px] pl-[7px]">
        <button aria-label="Favoritos" className={`${white} flex h-4 w-[25px] items-center justify-center gap-1`}><Star size={12} strokeWidth={1.800} color="#333f47" /><Right /></button>
        <span>Padrão</span>
      </div>
      <div className="flex min-h-0 flex-1">
        <ul className="mb-[7px] ml-[6px] w-[120px] shrink-0 bg-white pt-px">
          <TreeRow pad="pl-[1px]" open icon={<TreePipe />} text="Traçado de Tubo" />
          <TreeRow pad="pl-[10px]" open on icon={<TreePipe color="#33496e" />} text="Segmento" />
          <TreeRow pad="pl-[20px]" icon={<TreeTube />} text="Tubo" />
          <TreeRow pad="pl-[10px]" open icon={<TreePipe color="#6e787f" />} text="Nó" />
          <TreeRow pad="pl-[20px]" icon={<Elbow />} text="Cotovelo" />
          <TreeRow pad="pl-[20px]" icon={<TreePipe />} text="Transição" />
        </ul>
        <span className="ml-[7px] w-[3px] shrink-0 bg-[#dcdcdc]" />
        <div className="flex min-w-0 flex-1 flex-col pr-[10px] pl-[10px]">
          <div className="flex h-[15px] items-center"><label htmlFor="tab" className="w-[145px]">Tabela de Dimensões:</label><BlueSelect id="tab" value="EM FALTA" w="w-[175px]" /></div>
          <div className="mt-[9px] flex h-[18px] items-center"><label htmlFor="dia" className="w-[124px]">Diâmetro [mm]:</label><Dimension /><span className="w-[3px]" /><BlueSelect id="dia" value="25" w="w-[175px]" /></div>
          <hr className="mt-11 border-[#d5d5d5]" />
          <div className="mt-[7px] flex h-[22px] items-center"><span className="w-[146px] pb-[10px]">Eixo de Referência:</span><Anchor /></div>
          <div className="mt-1 flex h-[13px] items-center"><label htmlFor="ofx" className="w-[125px]">Afastamento:</label><ArrowH /><input id="ofx" defaultValue="0,000" className={`${field} ml-[7px]`} /><span className="ml-[23px]"><ArrowV /></span><input aria-label="Afastamento vertical" defaultValue="0,000" className={`${field} ml-[10px]`} /></div>
          <hr className="mt-4 border-[#d5d5d5]" />
          <h2 className="mt-2 h-3 font-bold">Conexões:</h2>
          <div className="mt-[3px] flex h-[15px] items-center"><label htmlFor="tip" className="w-[145px]">Tipo de Conexão:</label><BlueSelect id="tip" value="Soldado" w="w-[62px]" /></div>
          <div className="mt-[3px] flex h-[15px] items-center"><label htmlFor="fla" className="w-[145px]">Diâmetro do Flange [mm]:</label><input id="fla" disabled defaultValue="0,000" className="h-[13px] w-[62px] bg-[#f3f3f3] pl-[2px] text-[7px] text-[#b0b0b0] shadow-[0_1px_0_rgba(0,0,0,.08)] outline-none" /></div>
          <hr className="mt-auto border-[#d5d5d5]" />
          <footer className="flex h-[29px] shrink-0 items-center">
            <Draw w={19} h={13} d="M5 3h13l-4 4h-13zM1 7v2h13l4-4v-2M1 9v2h13l4-4v-2M14 7v4" sw={0.8} extra={<path d="M7 3l-3 4M10 3l-3 4M13 3l-3 4M16 3l-3 4" strokeWidth=".6" />} />
            <button className={`${white} ml-[5px] flex h-[14px] flex-1 items-center pr-1 pl-[6px]`}><Eye size={11} color="#26323a" /><span className="ml-[2px]">INS - Hidro</span><span className="ml-auto"><Right /></span></button>
            <button className={`${white} ml-[10px] h-[14px] w-[61px]`}>Cancelar</button>
            <button className="ml-[7px] h-[14px] w-[60px] rounded-[3px] bg-gradient-to-b from-[#2b91ff] to-[#067afd] text-white">OK</button>
          </footer>
        </div>
      </div>
    </div>
  );
}

const Dashes = ({ className }: { className: string }) => <span className={`${className} border-[#ef9a4c] border-dashed`} />;

function Canvas() {
  return (
    <main className="relative min-h-0 flex-1 overflow-hidden">
      <Scene />
      <div className="absolute inset-x-0 top-0 flex h-[13px] items-center justify-center gap-[5px] bg-black/20"><Dashes className="w-[18px] border-t" /><Draw w={18} h={9} d="M1 4.500h3M14 4.500h3" color={BLUE} extra={<><path d="M4 4.500C7 1 11 1 14 4.500 11 8 7 8 4 4.500z" stroke="#46525a" /><circle cx="9" cy="4.500" r="1.500" fill="#46525a" stroke="none" /></>} /></div>
      <div className="absolute inset-x-0 bottom-0 flex h-[13px] items-end justify-center bg-black/20 pr-5"><span className="flex h-[11px] w-[21px] items-center justify-center rounded-t-[2px] bg-white/15"><Dashes className="w-[17px] border-t" /></span></div>
      <div className="absolute top-[262px] left-0 flex h-[22px] w-[11px] items-center justify-center rounded-r-[2px] bg-white/20"><Dashes className="h-[17px] border-l" /></div>
      <div className="absolute top-[262px] right-0 flex h-[22px] w-[9px] items-center justify-center rounded-l-[2px] bg-[#e3e3e3]"><Dashes className="h-[17px] border-l" /></div>
      <Dialog />
    </main>
  );
}

const quick: { t: string; dim?: boolean; d: string }[] = [
  { t: "N/A", dim: true, d: "M1 4l3-3 3 2-3 4zM8 4c2 0 2 3 0 4M6 8l2 1" },
  { t: "1:100", d: "M1 3h10v5h-10zM3 8v-2M5 8v-1M7 8v-2M9 8v-1" },
  { t: "00 Modelo 3D", d: "M4 1h7l-2 4h-7zM2 5v2h7l2-4M2 7v2h7l2-4M4 3h5" },
  { t: "Modelo Co...", d: "M2 1h9v9h-9zM2 3h9M2 6h9M2 8h9M4 1l-1 2M8 1l-1 2M6 3l-1 3M10 3l-1 3M4 8l-1 2M8 6l-1 4" },
  { t: "CURA | Can...", d: "M4 1v4l2 2 2-2v-4M6 7v3" },
  { t: "100 -  Projet...", d: "M1 2h10v7h-10zM3 4h6v3h-6z" },
  { t: "BRANCO 10...", d: "M1 3h5v5h-5zM6 5h4v5h-4zM4 3v-2h5v4" },
  { t: "01 Planta do...", d: "M2 9h9l-2-4-3-3v7M1 10h10M8 6v3" },
  { t: "Apenas Mo...", d: "M1 5l4-4 4 3v2M1 5l3 4M3 3l3 3M5 6h6v4h-6zM5 8h6M8 6v4" },
  { t: "Modelo So...", d: "M1 4l3-3h6v5l-3 3h-5zM1 4h6v5M7 4l3-3" },
];

function QuickBar() {
  const c = "#46525a";
  return (
    <div className="flex h-[13px] shrink-0 overflow-hidden bg-[#f0f0f0] text-[7px] leading-none text-[#222]">
      <div className="flex w-[160px] shrink-0 items-center">
        <Cell w="w-[15px]" label="Vista anterior"><Draw w={12} h={12} d="M2 4a4.500 4.500 0 1 1 0 4M2 1.500V4h3M5 6h4" color={c} /></Cell>
        <Cell w="w-4" label="Vista seguinte"><Draw w={12} h={12} d="M10 4a4.500 4.500 0 1 0 0 4M10 1.500V4h-3M3 6h4" color="#b5b5b5" /></Cell>
        <Cell w="w-[15px]" label="Zoom"><ZoomIn size={12} color={c} /></Cell>
        <Divider />
        <Cell w="w-[19px]" label="Orbitar"><Draw w={11} h={10} d="M3 7C0 6 0 2 5 2s6 4 2 5M5 5v4M4 8l1 1 1-1" color={c} /></Cell>
        <Cell w="w-3" label="Caminhar"><Draw w={7} h={10} d="M3.500 1v.5M3.500 3v3l2 3M3.500 6l-2 3M1 5l2.500-2 2 2" color={c} /></Cell>
        <span className="w-1" /><Divider />
        <Cell w="w-[17px]" label="Ajustar à janela"><Draw w={12} h={12} d="M1.500 5.500a4 4 0 1 0 8 0a4 4 0 1 0-8 0M8.500 8.500l2.500 2.500M5.500 1.500v2M5.500 7.500v2M1.500 5.500h2M7.500 5.500h2" color={c} /></Cell>
        <span className="flex-1 text-center text-[#aaa]">N/A</span>
        <span className="pr-[5px]"><Right c="#999" /></span>
      </div>
      {quick.map((q, i) => (
        <button key={i} className={`${q.dim ? "text-[#aaa]" : ""} flex w-[78px] shrink-0 items-center border-l border-[#dcdcdc] pr-[5px] pl-1`}>
          <Draw w={12} h={11} d={q.d} sw={0.9} color={q.dim ? "#aaa" : c} />
          <span className="min-w-0 flex-1 text-center whitespace-nowrap">{q.t}</span>
          <Right c={q.dim ? "#999" : "#222"} />
        </button>
      ))}
    </div>
  );
}

export default function App() {
  return (
    <div className="flex h-screen w-full flex-col overflow-hidden bg-[#ececec] font-['Inter','Liberation_Sans',sans-serif] font-medium">
      <TopBar />
      <SecondBar />
      <InfoBox />
      <div className="flex min-h-0 flex-1">
        <Toolbox />
        <div className="flex min-w-0 flex-1 flex-col">
          <Tabs />
          <Canvas />
          <QuickBar />
        </div>
      </div>
      <footer className="flex h-4 shrink-0 items-start pt-px pl-[5px] text-[7px] leading-[11px] text-[#222]">Insira o Primeiro Nó do Traçado.</footer>
    </div>
  );
}
